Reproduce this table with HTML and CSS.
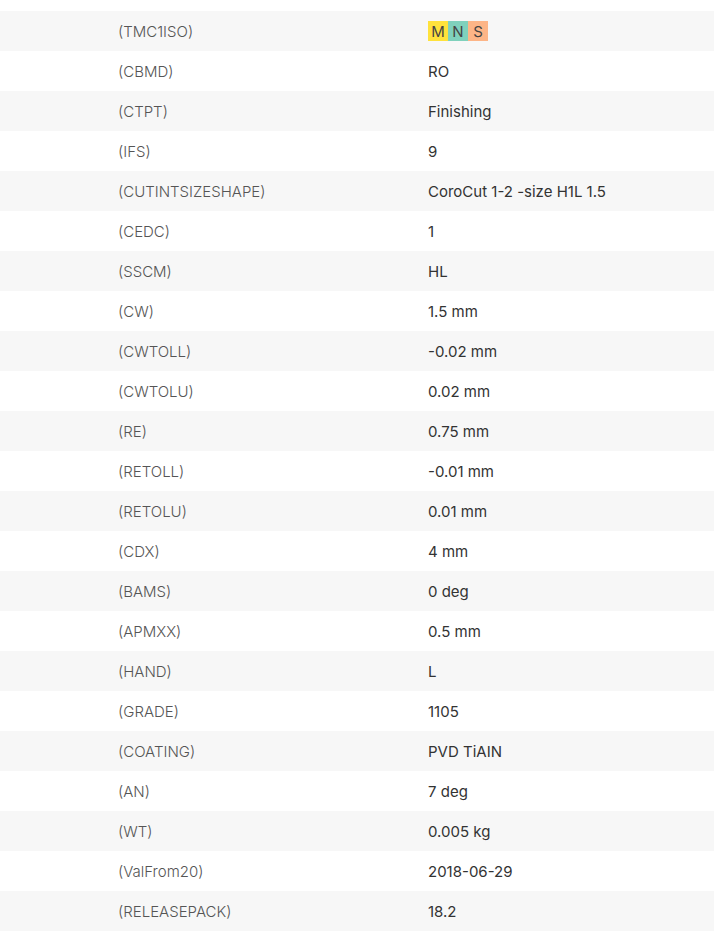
FILE: index.html
```html
<!DOCTYPE html>
<html>
<head>
<meta charset="utf-8">
<link rel="stylesheet" href="styles.css">
</head>
<body>
<div class="specs">
  <div class="row"><div class="label">(TMC1ISO)</div><div class="value"><span class="iso"><span class="iso-m">M</span><span class="iso-n">N</span><span class="iso-s">S</span></span></div></div>
  <div class="row"><div class="label">(CBMD)</div><div class="value">RO</div></div>
  <div class="row"><div class="label">(CTPT)</div><div class="value">Finishing</div></div>
  <div class="row"><div class="label">(IFS)</div><div class="value">9</div></div>
  <div class="row"><div class="label">(CUTINTSIZESHAPE)</div><div class="value">CoroCut 1-2 -size H1L 1.5</div></div>
  <div class="row"><div class="label">(CEDC)</div><div class="value">1</div></div>
  <div class="row"><div class="label">(SSCM)</div><div class="value">HL</div></div>
  <div class="row"><div class="label">(CW)</div><div class="value">1.5 mm</div></div>
  <div class="row"><div class="label">(CWTOLL)</div><div class="value">-0.02 mm</div></div>
  <div class="row"><div class="label">(CWTOLU)</div><div class="value">0.02 mm</div></div>
  <div class="row"><div class="label">(RE)</div><div class="value">0.75 mm</div></div>
  <div class="row"><div class="label">(RETOLL)</div><div class="value">-0.01 mm</div></div>
  <div class="row"><div class="label">(RETOLU)</div><div class="value">0.01 mm</div></div>
  <div class="row"><div class="label">(CDX)</div><div class="value">4 mm</div></div>
  <div class="row"><div class="label">(BAMS)</div><div class="value">0 deg</div></div>
  <div class="row"><div class="label">(APMXX)</div><div class="value">0.5 mm</div></div>
  <div class="row"><div class="label">(HAND)</div><div class="value">L</div></div>
  <div class="row"><div class="label">(GRADE)</div><div class="value">1105</div></div>
  <div class="row"><div class="label">(COATING)</div><div class="value">PVD TiAIN</div></div>
  <div class="row"><div class="label">(AN)</div><div class="value">7 deg</div></div>
  <div class="row"><div class="label">(WT)</div><div class="value">0.005 kg</div></div>
  <div class="row"><div class="label">(ValFrom20)</div><div class="value">2018-06-29</div></div>
  <div class="row"><div class="label">(RELEASEPACK)</div><div class="value">18.2</div></div>
</div>
</body>
</html>
```
FILE: styles.css
```css
html, body {
  margin: 0;
  padding: 0;
  background: #ffffff;
}
body {
  font-family: Inter, Roboto, "Liberation Sans", sans-serif;
  font-size: 15px;
  padding-top: 11px;
}
.specs {
  display: flex;
  flex-direction: column;
}
.row {
  display: grid;
  grid-template-columns: 310px 1fr;
  align-items: center;
  height: 40px;
  padding-left: 118px;
}
.row:nth-child(odd) {
  background: #f7f7f7;
}
.label {
  color: #555555;
  font-weight: 300;
}
.value {
  color: #333333;
}
.iso {
  display: inline-flex;
  height: 20px;
  vertical-align: middle;
}
.iso span {
  width: 20px;
  height: 20px;
  display: flex;
  align-items: center;
  justify-content: center;
  color: #444444;
  font-size: 15px;
}
.iso-m { background: #ffe23c; }
.iso-n { background: #7fd1bc; }
.iso-s { background: #fdb587; }
```
